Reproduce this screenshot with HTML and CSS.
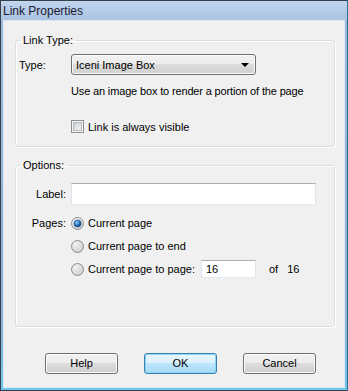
FILE: index.html
```html
<!DOCTYPE html>
<html lang="en">
	<head>
		<title>Link Properties</title>
		<link rel="stylesheet" href="styles.css">
	</head>
	<body>
		<div class="window">
			<div class="titlebar">Link Properties</div>
			<div class="client">
				<fieldset class="group group-type">
					<legend>Link Type:</legend>
					<div class="grid">
						<div class="label label-left">Type:</div>
						<div class="select">
							<span>Iceni Image Box</span>
							<span class="arrow"></span>
						</div>
						<div></div>
						<div class="desc">Use an image box to render a portion of the page</div>
						<div></div>
						<div class="check-row">
							<svg width="13" height="13" viewBox="0 0 13 13">
								<defs>
									<linearGradient id="cb" x1="0" y1="0" x2="1" y2="1">
										<stop offset="0" stop-color="#c9cdd3"/>
										<stop offset="1" stop-color="#f7f7f7"/>
									</linearGradient>
								</defs>
								<rect x="0.5" y="0.5" width="12" height="12" fill="#f6f6f6" stroke="#8e8f8f"/>
								<rect x="2.5" y="2.5" width="8" height="8" fill="url(#cb)" stroke="#b4b8bd"/>
							</svg>
							<span>Link is always visible</span>
						</div>
					</div>
				</fieldset>

				<fieldset class="group group-options">
					<legend>Options:</legend>
					<div class="grid">
						<div class="label">Label:</div>
						<div class="textbox textbox-wide"></div>
						<div class="label label-pages">Pages:</div>
						<div class="radios">
							<div class="radio-row">
								<svg width="13" height="13" viewBox="0 0 13 13">
									<defs>
										<radialGradient id="rb1" cx="0.4" cy="0.35" r="0.7">
											<stop offset="0" stop-color="#ffffff"/>
											<stop offset="1" stop-color="#c6cace"/>
										</radialGradient>
										<radialGradient id="rd1" cx="0.4" cy="0.35" r="0.6">
											<stop offset="0" stop-color="#8fd0fa"/>
											<stop offset="0.6" stop-color="#2a7cc0"/>
											<stop offset="1" stop-color="#13467c"/>
										</radialGradient>
									</defs>
									<circle cx="6.5" cy="6.5" r="6" fill="url(#rb1)" stroke="#8e8f8f"/>
									<circle cx="6.5" cy="6.5" r="3.6" fill="url(#rd1)" stroke="#1d4f80" stroke-width="0.6"/>
								</svg>
								<span>Current page</span>
							</div>
							<div class="radio-row">
								<svg width="13" height="13" viewBox="0 0 13 13">
									<defs>
										<radialGradient id="rb2" cx="0.35" cy="0.3" r="0.8">
											<stop offset="0" stop-color="#f4f4f4"/>
											<stop offset="1" stop-color="#c2c5c9"/>
										</radialGradient>
									</defs>
									<circle cx="6.5" cy="6.5" r="6" fill="url(#rb2)" stroke="#8e8f8f"/>
									<circle cx="6.5" cy="6.5" r="4" fill="none" stroke="#e6e7e8" stroke-width="0.8"/>
								</svg>
								<span>Current page to end</span>
							</div>
							<div class="radio-row">
								<svg width="13" height="13" viewBox="0 0 13 13">
									<defs>
										<radialGradient id="rb3" cx="0.35" cy="0.3" r="0.8">
											<stop offset="0" stop-color="#f4f4f4"/>
											<stop offset="1" stop-color="#c2c5c9"/>
										</radialGradient>
									</defs>
									<circle cx="6.5" cy="6.5" r="6" fill="url(#rb3)" stroke="#8e8f8f"/>
									<circle cx="6.5" cy="6.5" r="4" fill="none" stroke="#e6e7e8" stroke-width="0.8"/>
								</svg>
								<span class="to-label">Current page to page:</span>
								<div class="textbox textbox-page">16</div>
								<span class="of">of</span>
								<span class="total">16</span>
							</div>
						</div>
					</div>
				</fieldset>

				<div class="buttons">
					<div class="btn">Help</div>
					<div class="btn btn-default">OK</div>
					<div class="btn">Cancel</div>
				</div>
			</div>
		</div>
	</body>
</html>
```

FILE: styles.css
```css
body {
	margin: 0;
	font-family: "Liberation Sans", Arial, sans-serif;
	font-size: 11px;
	color: #000;
	background: #fff;
}
	.window {
		width: 348px;
		height: 391px;
		box-sizing: border-box;
		border: 1px solid #34404c;
		background: linear-gradient(to bottom, #9fb9da, #8fb0d6 80%, #6fc6ea);
		border-right-color: #2f6f92;
	}
	.titlebar {
		height: 19px;
		line-height: 20px;
		padding-left: 2px;
		font-size: 12px;
		color: #1a1a30;
		background: linear-gradient(to bottom, #c2d5ed, #a9c3e3);
	}
	.client {
		height: 368px;
		box-sizing: border-box;
		margin: 0 2px 2px 2px;
		background: #f0f0f0;
		border: 1px solid #dde8f4;
		overflow: hidden;
	}
	.group {
		margin: 13px 9px 0 11px;
		padding: 0;
		border: 1px solid #d5dfe5;
		border-radius: 3px;
		box-shadow: inset 1px 1px 0 #fff, 1px 1px 0 #fff;
		min-width: 0;
	}
	.group legend {
		margin-left: 4px;
		padding: 0 3px;
		line-height: 13px;
	}
	.group-options {
		margin-top: 12px;
	}
	.grid {
		display: grid;
		grid-template-columns: 55px 1fr;
		align-items: center;
	}
	.group-type .grid {
		margin-top: 7px;
		padding-bottom: 13px;
	}
	.group-options .grid {
		margin-top: 11px;
		padding-bottom: 47px;
	}
	.label {
		text-align: right;
		padding-right: 5px;
	}
	.label-left {
		text-align: left;
		padding: 0 0 0 3px;
	}
	.label-pages {
		align-self: start;
		margin-top: 8px;
		line-height: 20px;
	}
	.select {
		width: 185px;
		height: 21px;
		box-sizing: border-box;
		border: 1px solid #707070;
		border-radius: 3px;
		background: linear-gradient(to bottom, #f2f2f2 0%, #ebebeb 50%, #dddddd 50%, #cfcfcf 100%);
		box-shadow: inset 0 0 0 1px #fafafa;
		display: flex;
		align-items: center;
		justify-content: space-between;
		padding: 0 6px 0 4px;
	}
	.arrow {
		width: 0;
		height: 0;
		border-left: 4px solid transparent;
		border-right: 4px solid transparent;
		border-top: 4px solid #000;
	}
	.desc {
		margin-top: 10px;
		line-height: 13px;
		letter-spacing: -0.15px;
	}
	.check-row {
		margin-top: 22px;
		display: flex;
		align-items: center;
		gap: 4px;
		height: 13px;
	}
	.check-row svg, .radio-row svg {
		display: block;
		flex: none;
	}
	.textbox {
		box-sizing: border-box;
		background: #fff;
		border: 1px solid #e2e3ea;
		border-top-color: #abadb3;
		border-bottom-color: #e3e9ef;
	}
	.textbox-wide {
		width: 245px;
		height: 22px;
	}
	.radios {
		margin-top: 8px;
		display: flex;
		flex-direction: column;
		gap: 3px;
	}
	.radio-row {
		height: 20px;
		display: flex;
		align-items: center;
		gap: 4px;
	}
	.to-label {
		width: 109px;
	}
	.textbox-page {
		width: 55px;
		height: 18px;
		line-height: 16px;
		padding-left: 4px;
	}
	.of {
		margin-left: 9px;
	}
	.total {
		margin-left: 5px;
	}
	.buttons {
		margin-top: 26px;
		padding-left: 41px;
		display: flex;
		gap: 26px;
	}
	.btn {
		width: 73px;
		height: 21px;
		box-sizing: border-box;
		border: 1px solid #707070;
		border-radius: 3px;
		background: linear-gradient(to bottom, #f2f2f2 0%, #ebebeb 50%, #dddddd 50%, #cfcfcf 100%);
		box-shadow: inset 0 0 0 1px #fcfcfc;
		text-align: center;
		line-height: 19px;
	}
	.btn-default {
		border-color: #3c7fb1;
		background: linear-gradient(to bottom, #eaf6fd 0%, #d9f0fc 50%, #bee6fd 50%, #a7d9f5 100%);
		box-shadow: inset 0 0 0 1px #88d8f7;
	}
```
